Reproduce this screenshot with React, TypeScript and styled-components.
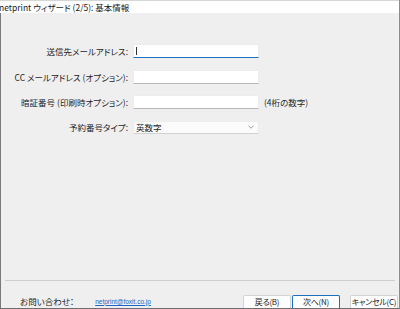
import React from 'react';
import styled, { createGlobalStyle } from 'styled-components';

const GlobalStyle = createGlobalStyle`
  html, body {
    margin: 0;
    padding: 0;
    background: #ffffff;
  }
  body {
    font-family: 'Noto Sans CJK JP', 'Noto Sans', sans-serif;
    font-feature-settings: 'palt';
  }
`;

const Window = styled.div`
  width: 400px;
  height: 309px;
  box-sizing: border-box;
  display: flex;
  flex-direction: column;
  overflow: hidden;
  border-right: 1px solid #8c8c8c;
  border-bottom: 1px solid #6e6e6e;
  background: #efefef;
`;

const TitleBar = styled.div`
  height: 13px;
  box-sizing: border-box;
  border-top: 1px solid #d6d6d6;
  background: #ffffff;
  display: flex;
  align-items: center;
  font-size: 8.5px;
  color: #1b1b1b;
  white-space: nowrap;
  margin-left: -1px;
`;

const Body = styled.div`
  flex: 1;
  display: flex;
  flex-direction: column;
  border-left: 1px solid #7a7a7a;
`;

const Form = styled.div`
  display: grid;
  grid-template-columns: 127px 126px auto;
  column-gap: 5px;
  row-gap: 11.5px;
  align-items: center;
  padding-top: 31px;
`;

const Label = styled.label`
  font-size: 8.5px;
  color: #1e1e1e;
  text-align: right;
  white-space: nowrap;
`;

const TextBox = styled.div<{ $focused?: boolean }>`
  position: relative;
  height: 14px;
  box-sizing: border-box;
  background: #ffffff;
  border: 1px solid #ececec;
  border-bottom: ${({ $focused }) => ($focused ? '1px solid #1f6fc0' : '1px solid #b9b9b9')};
`;

const Caret = styled.span`
  position: absolute;
  left: 2px;
  top: 2px;
  width: 1px;
  height: 8px;
  background: #333;
`;

const Select = styled.div`
  height: 13px;
  box-sizing: border-box;
  background: #fbfbfb;
  border: 1px solid #ececec;
  border-bottom-color: #d2d2d2;
  display: flex;
  align-items: center;
  justify-content: space-between;
  padding: 0 4px 0 2px;
  font-size: 8.5px;
  color: #1e1e1e;
`;

const Hint = styled.span`
  font-size: 8.5px;
  color: #2a2a2a;
  white-space: nowrap;
`;

const Spacer = styled.div`
  flex: 1;
`;

const Separator = styled.div`
  height: 1px;
  background: #cfcfcf;
  margin: 0 4px 0 4px;
`;

const Footer = styled.div`
  height: 27px;
  display: flex;
  align-items: flex-end;
`;

const Contact = styled.div`
  display: flex;
  align-items: center;
  height: 14px;
  padding-left: 19px;
  gap: 21px;
  flex: 1;
  font-size: 8.5px;
  color: #1e1e1e;
`;

const Link = styled.a`
  font-size: 6.5px;
  font-family: 'Liberation Sans', 'Noto Sans', sans-serif;
  color: #1a66c8;
  text-decoration: underline;
`;

const Buttons = styled.div`
  display: flex;
  align-items: flex-end;
  padding-right: 1px;
`;

const Button = styled.button<{ $primary?: boolean; $gap?: number }>`
  width: 48px;
  height: 13px;
  margin-left: ${({ $gap }) => $gap ?? 0}px;
  box-sizing: border-box;
  padding: 0;
  font-family: 'Noto Sans CJK JP', sans-serif;
  font-feature-settings: 'palt';
  font-size: 8px;
  letter-spacing: -0.3px;
  white-space: nowrap;
  overflow: visible;
  color: #1e1e1e;
  background: #fdfdfd;
  border: 1px solid ${({ $primary }) => ($primary ? '#1f6fc0' : '#d4d4d4')};
  border-bottom: none;
  border-radius: 2px 2px 0 0;
  line-height: 12px;
`;

const Chevron = () => (
  <svg width="6" height="4" viewBox="0 0 6 4">
    <path d="M0.5 0.8 L3 3.2 L5.5 0.8" fill="none" stroke="#8a8a8a" strokeWidth="0.8" />
  </svg>
);

export default function App() {
  return (
    <>
      <GlobalStyle />
      <Window>
        <TitleBar>netprint ウィザード (2/5): 基本情報</TitleBar>
        <Body>
          <Form>
            <Label>送信先メールアドレス:</Label>
            <TextBox $focused>
              <Caret />
            </TextBox>
            <span />

            <Label>CC メールアドレス (オプション):</Label>
            <TextBox />
            <span />

            <Label>暗証番号 (印刷時オプション):</Label>
            <TextBox />
            <Hint>(4桁の数字)</Hint>

            <Label>予約番号タイプ:</Label>
            <Select>
              <span>英数字</span>
              <Chevron />
            </Select>
            <span />
          </Form>
          <Spacer />
          <Separator />
          <Footer>
            <Contact>
              <span>お問い合わせ：</span>
              <Link href="#">netprint@foxit.co.jp</Link>
            </Contact>
            <Buttons>
              <Button>戻る(B)</Button>
              <Button $primary $gap={1}>次へ(N)</Button>
              <Button $gap={10}>キャンセル(C)</Button>
            </Buttons>
          </Footer>
        </Body>
      </Window>
    </>
  );
}
